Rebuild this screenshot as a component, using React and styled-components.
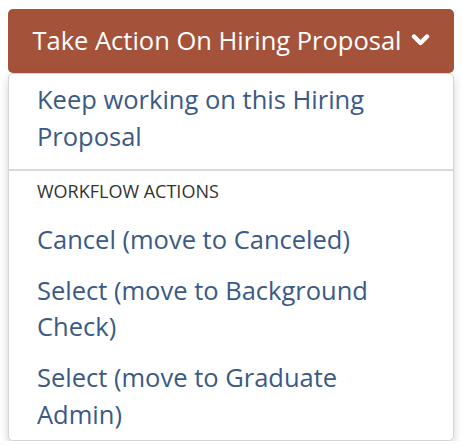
import React from "react";
import styled, { createGlobalStyle } from "styled-components";

const Global = createGlobalStyle`
  html, body { margin: 0; padding: 0; background: #ffffff; }
  body { font-family: "Open Sans", "Liberation Sans", sans-serif; }
`;

const Wrap = styled.div`
  padding: 9px 8px 0 8px;
  width: 446px;
`;

const Toggle = styled.button`
  display: flex;
  align-items: center;
  justify-content: center;
  gap: 9px;
  width: 100%;
  height: 64px;
  border: none;
  border-radius: 5px;
  background: #a5523b;
  color: #ffffff;
  font-family: "Open Sans", "Liberation Sans", sans-serif;
  font-size: 25.5px;
  padding: 0 0 2px 0;
  cursor: pointer;
`;

const Menu = styled.ul`
  list-style: none;
  margin: 0;
  padding: 0;
  background: #fff;
  border: 1px solid #d6d6d6;
  border-radius: 5px;
  box-shadow: 0 4px 10px rgba(0, 0, 0, 0.18);
`;

const Item = styled.li`
  padding: 7.25px 28px;
  font-size: 25.5px;
  line-height: 36.5px;
  color: #3b5a85;
`;

const Divider = styled.li`
  height: 2px;
  margin: 7px 0 8px 0;
  background: #d9d9d9;
`;

const Header = styled.li`
  padding: 0 28px 11px 28px;
  font-size: 18px;
  line-height: 24px;
  color: #333;
  text-transform: uppercase;
`;

const Chevron = () => (
  <svg width="19" height="14" viewBox="0 0 19 14" aria-hidden="true">
    <path d="M3 3.5 L9.5 10 L16 3.5" fill="none" stroke="#fff" strokeWidth="4.4" strokeLinecap="round" strokeLinejoin="round" />
  </svg>
);

export default function App() {
  return (
    <>
      <Global />
      <Wrap>
        <Toggle>
          Take Action On Hiring Proposal
          <Chevron />
        </Toggle>
        <Menu>
          <Item>Keep working on this Hiring Proposal</Item>
          <Divider />
          <Header>Workflow Actions</Header>
          <Item>Cancel (move to Canceled)</Item>
          <Item>Select (move to Background Check)</Item>
          <Item>Select (move to Graduate Admin)</Item>
        </Menu>
      </Wrap>
    </>
  );
}
